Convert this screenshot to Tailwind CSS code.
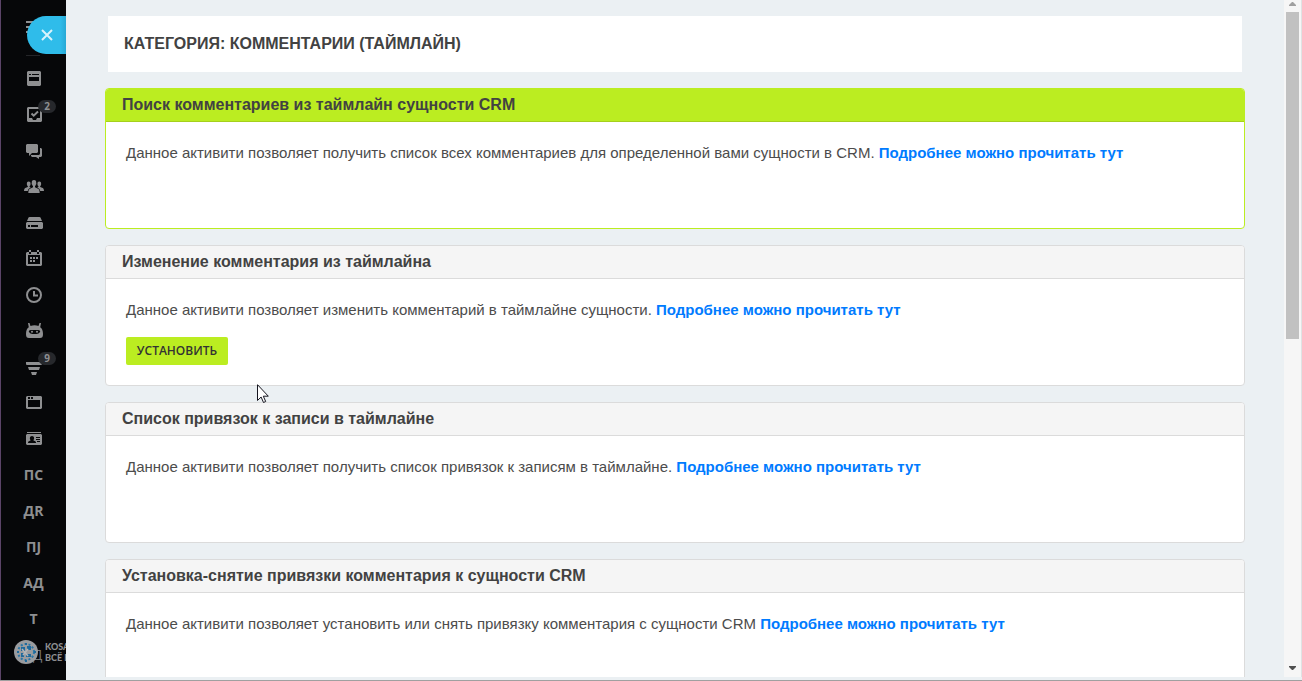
<!DOCTYPE html>
<html lang="ru">
  <head>
    <meta charset="UTF-8" />
    <meta name="viewport" content="width=device-width, initial-scale=1.0" />
    <title>Комментарии (таймлайн)</title>
    <!-- Tailwind CSS -->
    <script src="https://cdn.jsdelivr.net/npm/@tailwindcss/browser@4"></script>
  </head>
  <body class="relative flex h-screen overflow-hidden border-b border-[#a0a0a0] bg-[#ebf0f3] font-['Liberation_Sans',Arial,sans-serif] text-[#424242]">
    <!-- Sidebar -->
    <aside class="relative w-[66px] shrink-0 overflow-hidden border-l border-[#5b4468] bg-[#060709] text-[#8e8f91]">
      <!-- Menu -->
      <button class="flex h-[60px] w-full items-start pt-[21px] pl-[25px]" aria-label="Меню">
        <svg class="h-3 w-4" viewBox="0 0 16 12" fill="currentColor"><path d="M0 0h16v2H0zM0 5h16v2H0zM0 10h16v2H0z" /></svg>
      </button>
      <div class="absolute top-[55px] left-[25px] h-px w-3.5 bg-[#242528]"></div>

      <nav class="flex flex-col font-['Open_Sans',sans-serif] text-sm font-bold">
        <a href="#" class="flex h-9 items-center pl-[26px]" aria-label="Лента">
          <svg class="h-[15px] w-3.5" viewBox="0 0 14 15" fill="currentColor" fill-rule="evenodd"><path d="M1 0h12l1 1v13l-1 1H1l-1-1V1zM2 3v1h2V3zM5 3v1h7V3zM2 6v4h10V6z" /></svg>
        </a>
        <a href="#" class="relative flex h-9 items-center pl-[26px]" aria-label="Задачи">
          <svg class="h-[15px] w-[15px]" viewBox="0 0 15 15" fill="currentColor" fill-rule="evenodd"><path d="M1 0h13l1 1v13l-1 1H1l-1-1V1zM2 2v9h3l1 2h3l1-2h3V2z" /><path d="M4.500 6.500l2.200 2.200L11 4.500" fill="none" stroke="currentColor" stroke-width="2" /></svg>
          <span class="absolute top-1 left-[37px] flex h-[13px] w-[18px] items-center justify-center rounded-full bg-[#26282c] text-[10px]">2</span>
        </a>
        <a href="#" class="flex h-9 items-center pt-0.5 pl-[25px]" aria-label="Чат">
          <svg class="h-[15px] w-4" viewBox="0 0 16 15" fill="currentColor"><path d="M1 0h10l1 1v7l-1 1H6l-3 3V9H1L0 8V1zM14 4h1l1 1v7l-1 1h-2v2l-3-2H6l-1-1v-1h8l1-1z" /></svg>
        </a>
        <a href="#" class="flex h-9 items-center pt-px pl-[23px]" aria-label="Группы">
          <svg class="h-[14px] w-5" viewBox="0 0 20 14" fill="currentColor"><path d="M10 0c1.700 0 2.400 1.200 2.200 3 .4.6 0 1.400-.4 1.700-.2.700-.5 1.200-.8 1.400v1.200l3.500 1.800c.8.5 1 1.400 1.200 3.900H4.300c.2-2.500.4-3.400 1.200-3.900L9 7.300V6.100c-.3-.2-.6-.7-.8-1.400-.4-.3-.8-1.100-.4-1.700C7.600 1.200 8.300 0 10 0z" /><path d="M4.700 1.500c1.500 0 2 1 1.800 2.500.2.700-.3 1.700-.9 2v1l1.200.6-1.600.9c-.8.5-1.200 1.500-1.400 2.500H0c.2-2 .4-2.500 1.200-3L3.800 7V6c-.6-.3-1.100-1.300-.9-2-.2-1.500.3-2.500 1.800-2.500zM15.300 1.500c-1.500 0-2 1-1.800 2.500-.2.700.3 1.700.9 2v1l-1.200.6 1.600.9c.8.5 1.200 1.500 1.400 2.500H20c-.2-2-.4-2.500-1.200-3L16.200 7V6c.6-.3 1.100-1.300.9-2 .2-1.500-.3-2.500-1.800-2.500z" /></svg>
        </a>
        <a href="#" class="flex h-9 items-center pt-px pl-[25px]" aria-label="Диск">
          <svg class="h-3 w-[17px]" viewBox="0 0 17 12" fill="currentColor" fill-rule="evenodd"><path d="M3.500 0h10l1 .5L16 4H1L2.500.5zM1 5h15l1 1v5l-1 1H1l-1-1V6zM2 8v2h2V8zM5 8v2h7V8z" /></svg>
        </a>
        <a href="#" class="flex h-9 items-center pl-[25px]" aria-label="Календарь">
          <svg class="h-4 w-4" viewBox="0 0 16 16" fill="currentColor" fill-rule="evenodd"><path d="M1 2h2v2h2V2h6v2h2V2h2l1 1v12l-1 1H1l-1-1V3zM2 5v9h12V5z" /><path d="M3 0h2v2H3zM11 0h2v2h-2zM7 7h2v2H7zM10 7h2v2h-2zM4 7h2v2H4zM4 10h2v2H4zM7 10h2v2H7z" /></svg>
        </a>
        <a href="#" class="flex h-9 items-center pt-0.5 pl-[25px]" aria-label="Время">
          <svg class="h-4 w-4" viewBox="0 0 16 16" fill="none" stroke="currentColor" stroke-width="2"><circle cx="8" cy="8" r="7" /><path d="M8 4v4.500h4" /></svg>
        </a>
        <a href="#" class="flex h-9 items-center pt-px pl-[25px]" aria-label="Роботы">
          <svg class="h-[15px] w-[17px]" viewBox="0 0 17 15" fill="currentColor" fill-rule="evenodd"><path d="M2 0h1.500l1 3c2.500-1 5.500-1 8 0l1-3H15l-.8 4.200C16 5.500 17 7.500 17 11c0 3-1 4-3 4H3c-2 0-3-1-3-4 0-3.500 1-5.500 2.800-6.800zM5 7C3 7 2.500 8 3 9c.8 1.300 2 2 3.500 2h4c1.500 0 2.700-.7 3.500-2 .5-1 0-2-2-2z" /><circle cx="6" cy="8.700" r="1" /><circle cx="11" cy="8.700" r="1" /></svg>
        </a>
        <a href="#" class="relative flex h-9 items-center pt-1 pl-[25px]" aria-label="CRM">
          <svg class="h-[13px] w-4" viewBox="0 0 16 13" fill="currentColor"><path d="M0 0h16v2l-.5 1H.5L0 2zM2 5h12l-1 3H3zM5 10h6l-1 3H6z" /></svg>
          <span class="absolute top-1 left-[37px] flex h-[13px] w-[18px] items-center justify-center rounded-full bg-[#26282c] text-[10px]">9</span>
        </a>
        <a href="#" class="flex h-9 items-center pl-[25px]" aria-label="Сайты">
          <svg class="h-[13px] w-4" viewBox="0 0 16 13" fill="currentColor" fill-rule="evenodd"><path d="M1 0h14l1 1v11l-1 1H1l-1-1V1zM2 4v7h12V4zM2 1v2h2V1zM5 1v2h2V1z" /></svg>
        </a>
        <a href="#" class="flex h-9 items-center pl-[25px]" aria-label="Контакты">
          <svg class="h-[13px] w-4" viewBox="0 0 16 13" fill="currentColor" fill-rule="evenodd"><path d="M1 0h14v1H1zM1 2h14l1 1v9l-1 1H1l-1-1V3zM10 5v1h4V5zM10 7v1h4V7zM11 9v1h3V9zM2 11h8c0-1.500-.5-2-2.500-2.500V8C8.500 7 8.500 4 6 4S3.500 7 4.500 8v.5C2.500 9 2 9.500 2 11z" /></svg>
        </a>
        <a href="#" class="flex h-9 items-center justify-center pt-0.5">ПС</a>
        <a href="#" class="flex h-9 items-center justify-center pt-0.5">ДR</a>
        <a href="#" class="flex h-9 items-center justify-center pt-0.5">ПJ</a>
        <a href="#" class="flex h-9 items-center justify-center pt-0.5">АД</a>
        <a href="#" class="flex h-9 items-center justify-center pt-0.5">Т</a>
        <a href="#" class="flex h-9 items-center justify-center pt-0.5 pl-2 font-normal text-[#77787a]">Д</a>
      </nav>

      <!-- Watermark -->
      <div class="absolute bottom-4 left-[13px] flex items-center gap-[7px] font-[Lato,sans-serif] text-[9px] leading-[11px] font-black whitespace-nowrap">
        <svg class="h-6 w-6 shrink-0" viewBox="0 0 24 24">
          <circle cx="12" cy="12" r="12" fill="#9a9c9f" />
          <circle cx="12" cy="12" r="8" fill="none" stroke="#2a76a8" stroke-width="2" stroke-dasharray="2 2" />
          <path d="M7 7h4v4H7zM13 6h4v4h-4zM7 13h3v4H7zM12 14h5v3h-5zM11 3h2v2h-2zM11 20h2v2h-2zM3 11h2v2H3zM20 11h2v2h-2z" fill="#1f6a9c" />
          <path d="M8 9l6 7M14 9l-5 6" stroke="#b2b5b8" stroke-width="1.500" />
        </svg>
        <span>KOSA<br />ВСЁ В</span>
      </div>
    </aside>

    <!-- Close panel button -->
    <button class="absolute top-4 left-[27px] flex h-[38px] w-[39px] items-center rounded-l-full bg-linear-to-r from-[#2fbcea] from-85% to-[#27a9d5] pl-3.5 text-[#d9f3fc]" aria-label="Закрыть">
      <svg class="h-3 w-3" viewBox="0 0 12 12" fill="none" stroke="currentColor" stroke-width="2"><path d="M1 1l10 10M11 1L1 11" /></svg>
    </button>

    <!-- Content -->
    <main class="mb-[3px] min-w-0 flex-1 overflow-hidden px-[39px] pt-4">
      <h1 class="mx-[3px] bg-white p-4 text-base leading-6 font-bold">КАТЕГОРИЯ: КОММЕНТАРИИ (ТАЙМЛАЙН)</h1>

      <div class="mt-4 flex flex-col gap-4">
        <section class="h-[141px] overflow-hidden rounded-sm border border-[#bbed21] bg-white">
          <h2 class="border-b border-[#a5d01d] bg-[#bbed21] px-4 text-base leading-8 font-bold">Поиск комментариев из таймлайн сущности CRM</h2>
          <div class="px-5 pt-[19px] text-[15px] leading-6 text-[#4c4c4c]">
            <p>Данное активити позволяет получить список всех комментариев для определенной вами сущности в CRM. <a href="#" class="font-bold text-[#007bff]">Подробнее можно прочитать тут</a></p>
          </div>
        </section>

        <section class="h-[141px] overflow-hidden rounded-sm border border-[#dbdbdb] bg-white">
          <h2 class="border-b border-[#dbdbdb] bg-[#f5f5f5] px-4 text-base leading-8 font-bold">Изменение комментария из таймлайна</h2>
          <div class="px-5 pt-[19px] text-[15px] leading-6 text-[#4c4c4c]">
            <p>Данное активити позволяет изменить комментарий в таймлайне сущности. <a href="#" class="font-bold text-[#007bff]">Подробнее можно прочитать тут</a></p>
            <button class="mt-[15px] block h-7 w-[102px] rounded-[2px] bg-[#bbed21] text-center font-['Open_Sans',sans-serif] text-xs font-semibold text-[#333]">УСТАНОВИТЬ</button>
          </div>
        </section>

        <section class="h-[141px] overflow-hidden rounded-sm border border-[#dbdbdb] bg-white">
          <h2 class="border-b border-[#dbdbdb] bg-[#f5f5f5] px-4 text-base leading-8 font-bold">Список привязок к записи в таймлайне</h2>
          <div class="px-5 pt-[19px] text-[15px] leading-6 text-[#4c4c4c]">
            <p>Данное активити позволяет получить список привязок к записям в таймлайне. <a href="#" class="font-bold text-[#007bff]">Подробнее можно прочитать тут</a></p>
          </div>
        </section>

        <section class="h-[141px] overflow-hidden rounded-sm border border-[#dbdbdb] bg-white">
          <h2 class="border-b border-[#dbdbdb] bg-[#f5f5f5] px-4 text-base leading-8 font-bold">Установка-снятие привязки комментария к сущности CRM</h2>
          <div class="px-5 pt-[19px] text-[15px] leading-6 text-[#4c4c4c]">
            <p>Данное активити позволяет установить или снять привязку комментария с сущности CRM <a href="#" class="font-bold text-[#007bff]">Подробнее можно прочитать тут</a></p>
          </div>
        </section>
      </div>
    </main>

    <!-- Scrollbar -->
    <div class="mb-[3px] flex w-[18px] shrink-0 flex-col items-center border-r border-[#dfe3e4] bg-[#f6f6f6]">
      <svg class="mt-0.5 h-1 w-[7px] shrink-0" viewBox="0 0 7 4" fill="#a0a0a0"><path d="M3 0h1l3 3v1H0V3z" /></svg>
      <div class="mt-1.5 h-[327px] w-[13px] shrink-0 bg-[#c1c1c1]"></div>
      <svg class="mt-auto mb-[7px] h-1 w-[7px] shrink-0" viewBox="0 0 7 4" fill="#505050"><path d="M0 0h7v1L4 4H3L0 1z" /></svg>
    </div>

    <!-- Mouse pointer -->
    <svg class="pointer-events-none absolute top-[384px] left-[257px] h-[19px] w-3" viewBox="0 0 12 19"><path d="M.5.700v15.800l3.600-3.500 2.400 5.500 2.200-1-2.400-5.300h5z" fill="#fff" stroke="#15151f" stroke-width="1" /></svg>
  </body>
</html>
